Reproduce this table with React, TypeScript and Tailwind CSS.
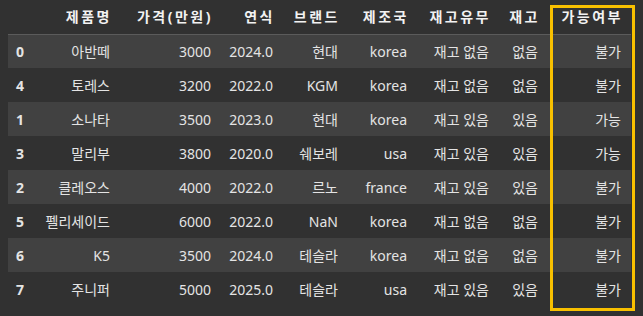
import React from 'react'

interface Row {
  idx: string
  name: string
  price: string
  year: string
  brand: string
  country: string
  stock: string
  has: string
  ok: string
}

const rows: Row[] = [
  { idx: '0', name: '아반떼', price: '3000', year: '2024.0', brand: '현대', country: 'korea', stock: '재고 없음', has: '없음', ok: '불가' },
  { idx: '4', name: '토레스', price: '3200', year: '2022.0', brand: 'KGM', country: 'korea', stock: '재고 없음', has: '없음', ok: '불가' },
  { idx: '1', name: '소나타', price: '3500', year: '2023.0', brand: '현대', country: 'korea', stock: '재고 있음', has: '있음', ok: '가능' },
  { idx: '3', name: '말리부', price: '3800', year: '2020.0', brand: '쉐보레', country: 'usa', stock: '재고 있음', has: '있음', ok: '가능' },
  { idx: '2', name: '클레오스', price: '4000', year: '2022.0', brand: '르노', country: 'france', stock: '재고 있음', has: '있음', ok: '불가' },
  { idx: '5', name: '펠리세이드', price: '6000', year: '2022.0', brand: 'NaN', country: 'korea', stock: '재고 없음', has: '없음', ok: '불가' },
  { idx: '6', name: 'K5', price: '3500', year: '2024.0', brand: '테슬라', country: 'korea', stock: '재고 없음', has: '없음', ok: '불가' },
  { idx: '7', name: '주니퍼', price: '5000', year: '2025.0', brand: '테슬라', country: 'usa', stock: '재고 있음', has: '있음', ok: '불가' },
]

const headers = ['제품명', '가격(만원)', '연식', '브랜드', '제조국', '재고유무', '재고', '가능여부']
const widths = ['w-[89px]', 'w-[101px]', 'w-[62px]', 'w-[65px]', 'w-[69px]', 'w-[82px]', 'w-[49px]', 'w-[83px]']

export default function App() {
  return (
    <div
      className="relative w-full h-[316px] bg-[#313131] text-[#e4e4e4] text-[14px] overflow-hidden"
      style={{ fontFamily: '"Noto Sans", "Noto Sans CJK KR", sans-serif' }}
    >
      <table className="ml-2 border-collapse table-fixed w-[623px]">
        <thead>
          <tr className="h-[34px] border-b border-[#5b5b5b]">
            <th className="w-[23px]"></th>
            {headers.map((h, i) => (
              <th key={h} className={`${widths[i]} text-right pr-[8px] font-bold tracking-[2.5px] text-[#f2f2f2] whitespace-nowrap`}>
                {h}
              </th>
            ))}
          </tr>
        </thead>
        <tbody>
          {rows.map((r, i) => (
            <tr key={r.idx} className={`h-[34px] ${i % 2 === 0 ? 'bg-[#414141]' : ''}`}>
              <td className="pl-2 font-bold text-left">{r.idx}</td>
              {[r.name, r.price, r.year, r.brand, r.country, r.stock, r.has, r.ok].map((v, j) => (
                <td key={j} className="text-right pr-[10px] whitespace-nowrap">
                  {v}
                </td>
              ))}
            </tr>
          ))}
        </tbody>
      </table>

      {/* highlight box */}
      <div className="absolute left-[550px] top-[5px] w-[85px] h-[306px] border-[3px] border-[#f8c000] pointer-events-none"></div>
    </div>
  )
}
